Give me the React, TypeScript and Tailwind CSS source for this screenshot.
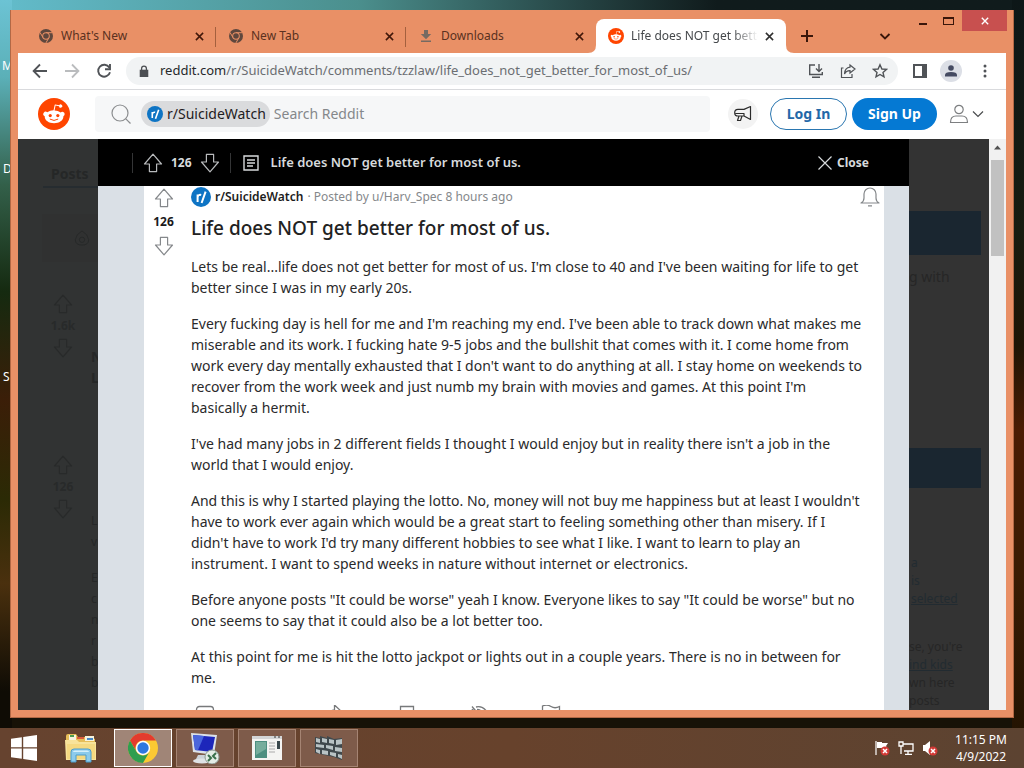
import type { ReactNode } from "react";

const stroke = { fill: "none", stroke: "currentColor" } as const;

function Snoo({ className }: { className: string }) {
  return (
    <svg viewBox="0 0 20 20" className={className} aria-hidden="true">
      <circle cx="10" cy="10" r="10" fill="#ff4500" />
      <path
        fill="#fff"
        d="M16.67 10a1.46 1.46 0 0 0-2.47-1 7.12 7.12 0 0 0-3.85-1.23l.65-3.08 2.14.45a1 1 0 1 0 .13-.61L10.82 4a.31.31 0 0 0-.37.24l-.74 3.47a7.14 7.14 0 0 0-3.9 1.23 1.46 1.46 0 1 0-1.61 2.39 2.87 2.87 0 0 0 0 .44c0 2.24 2.61 4.06 5.83 4.06s5.83-1.82 5.83-4.06a2.87 2.87 0 0 0 0-.44 1.46 1.46 0 0 0 .81-1.33Z"
      />
      <circle cx="7.65" cy="11" r="1" fill="#ff4500" />
      <circle cx="12.4" cy="11" r="1" fill="#ff4500" />
      <path d="M7.6 13.3q2.4 1.6 4.8 0" stroke="#ff4500" strokeWidth=".6" fill="none" strokeLinecap="round" />
    </svg>
  );
}

function ChromeMono() {
  return (
    <svg viewBox="0 0 16 16" className="size-4 shrink-0" aria-hidden="true">
      <circle cx="8" cy="8" r="7" fill="#5f473d" />
      <circle cx="8" cy="8" r="3.8" fill="#e99066" />
      <path d="M8 4.700h6.400M5.100 9.700 1.900 4.300M10.900 9.700l-3.100 5.400" stroke="#e99066" strokeWidth="1" />
      <circle cx="8" cy="8" r="2.800" fill="#5f473d" />
    </svg>
  );
}

function DownloadMono() {
  return (
    <svg viewBox="0 0 16 16" className="size-4 shrink-0" fill="#766a62" aria-hidden="true">
      <path d="M6 2h4v4h3.2L8 11.2 2.8 6H6zM3 12.4h10V14H3z" />
    </svg>
  );
}

function Cross({ className }: { className: string }) {
  return (
    <svg viewBox="0 0 10 10" className={className} {...stroke} strokeWidth="1.7" aria-hidden="true">
      <path d="m1 1 8 8M9 1 1 9" />
    </svg>
  );
}

function VoteArrow({ down = false }: { down?: boolean }) {
  return (
    <svg viewBox="0 0 20 20" className={down ? "size-5 rotate-180" : "size-5"} {...stroke} strokeWidth="1.2" aria-hidden="true">
      <path d="M10 1.2 18.5 11H13.6v7.6H6.4V11H1.5z" strokeLinejoin="round" />
    </svg>
  );
}

function SubIcon({ className }: { className: string }) {
  return (
    <svg viewBox="0 0 20 20" className={className} aria-hidden="true">
      <circle cx="10" cy="10" r="10" fill="#0e74c4" />
      <path d="M6.6 15V7.6M6.6 10.4c.2-2 1.6-2.9 3.6-2.5M10.6 16 14.6 4.6" stroke="#fff" strokeWidth="2" fill="none" />
    </svg>
  );
}

function Tab({ icon, title, active = false, divider = false }: { icon: ReactNode; title: string; active?: boolean; divider?: boolean }) {
  return (
    <div
      className={
        active
          ? "relative flex h-[34px] w-[190px] items-center gap-[7px] rounded-t-lg bg-white pr-3 pl-3 text-[#45484b]"
          : "relative flex h-[34px] w-[190px] items-center gap-[7px] pr-3 pl-3 text-[#5a3120]"
      }
    >
      {icon}
      <span
        className={
          active
            ? "flex-1 overflow-hidden whitespace-nowrap [mask-image:linear-gradient(to_right,black_80%,transparent)]"
            : "flex-1 overflow-hidden whitespace-nowrap"
        }
      >
        {title}
      </span>
      <button aria-label={"Close " + title} className={active ? "text-[#2f2f2f]" : "text-[#42180a]"}>
        <Cross className="size-[9px]" />
      </button>
      {divider && <span className="absolute top-2 right-0 h-5 w-px bg-[#a4603e]" />}
      {active && (
        <>
          <svg viewBox="0 0 8 8" className="absolute bottom-0 -left-2 size-2" aria-hidden="true">
            <path d="M8 0v8H0q8 0 8-8" fill="#fff" />
          </svg>
          <svg viewBox="0 0 8 8" className="absolute -right-2 bottom-0 size-2" aria-hidden="true">
            <path d="M0 0v8h8q-8 0-8-8" fill="#fff" />
          </svg>
        </>
      )}
    </div>
  );
}

function TitleBar() {
  return (
    <header className="flex h-[43px] shrink-0 pl-[15px] text-xs">
      <div className="flex items-end">
        <Tab icon={<ChromeMono />} title="What's New" divider />
        <Tab icon={<ChromeMono />} title="New Tab" divider />
        <Tab icon={<DownloadMono />} title="Downloads" />
        <Tab icon={<Snoo className="size-4 shrink-0" />} title="Life does NOT get better for most of us." active />
      </div>
      <div className="flex flex-1 items-end justify-between pb-[11px] pl-[15px] text-[#3a160a]">
        <button aria-label="New tab" className="flex">
          <svg viewBox="0 0 12 12" className="size-3" {...stroke} strokeWidth="2" aria-hidden="true">
            <path d="M6 0v12M0 6h12" />
          </svg>
        </button>
        <button aria-label="Search tabs" className="flex">
          <svg viewBox="0 0 12 12" className="size-3" {...stroke} strokeWidth="1.8" aria-hidden="true">
            <path d="m1.5 4 4.5 4.5L10.500 4" />
          </svg>
        </button>
      </div>
      <div className="mr-1.5 ml-5 flex h-[21px] text-[#3a160a]">
        <button aria-label="Minimize" className="flex w-6 items-end justify-center pb-1.5">
          <span className="h-0.5 w-2 bg-current" />
        </button>
        <button aria-label="Maximize" className="flex w-[27px] items-center justify-center">
          <span className="h-2 w-[11px] border border-t-2 border-current" />
        </button>
        <button aria-label="Close window" className="flex w-[45px] items-center justify-center bg-[#c8504f] text-white">
          <Cross className="size-2" />
        </button>
      </div>
    </header>
  );
}

function Toolbar() {
  return (
    <nav className="flex h-[37px] shrink-0 items-center border-b border-[#d9dadd] bg-white pr-3.5 pl-3.5 text-[#505357]">
      <div className="flex gap-4">
        <button aria-label="Back">
          <svg viewBox="0 0 16 16" className="size-4" {...stroke} strokeWidth="1.8" aria-hidden="true">
            <path d="M15 8H2M8 1.500 1.600 8 8 14.500" />
          </svg>
        </button>
        <button aria-label="Forward" className="text-[#babcbe]">
          <svg viewBox="0 0 16 16" className="size-4" {...stroke} strokeWidth="1.8" aria-hidden="true">
            <path d="M1 8h13M8 1.500 14.400 8 8 14.500" />
          </svg>
        </button>
        <button aria-label="Reload">
          <svg viewBox="0 0 16 16" className="size-4" {...stroke} strokeWidth="1.9" aria-hidden="true">
            <path d="M13.300 4.500A6 6 0 1 0 14 9.300M14 1v5.200H9" />
          </svg>
        </button>
      </div>
      <div className="ml-3.5 flex h-7 flex-1 items-center rounded-full bg-[#f1f3f4] pr-2.5 pl-3">
        <svg viewBox="0 0 12 14" className="h-3 w-3 shrink-0" fill="#4b4e52" aria-hidden="true">
          <path d="M1 5.500h10V14H1z" />
          <path d="M3.200 6V4a2.800 2.800 0 0 1 5.600 0v2" fill="none" stroke="#4b4e52" strokeWidth="1.500" />
        </svg>
        <a href="#post" className="ml-2.5 flex-1 text-[13px] whitespace-nowrap text-[#6b6e72]">
          <span className="text-[#26282b]">reddit.com</span>/r/SuicideWatch/comments/tzzlaw/life_does_not_get_better_for_most_of_us/
        </a>
        <div className="flex gap-4">
          <button aria-label="Install">
            <svg viewBox="0 0 16 16" className="size-4" {...stroke} strokeWidth="1.4" aria-hidden="true">
              <path d="M7 2H1.700v9.500h12.600V9M4 14.300h8M11 1v7M8 5.500l3 3 3-3" />
            </svg>
          </button>
          <button aria-label="Share">
            <svg viewBox="0 0 16 16" className="size-4" {...stroke} strokeWidth="1.2" aria-hidden="true">
              <path d="M3.500 5H1.500v9.500H12V11M10 2l5 4-5 4V7.700C7.500 7.600 5.800 8.500 4.500 11 4.700 7 6.500 4.600 10 4.200z" />
            </svg>
          </button>
          <button aria-label="Bookmark">
            <svg viewBox="0 0 16 16" className="size-4" {...stroke} strokeWidth="1.4" aria-hidden="true">
              <path d="m8 1.800 1.900 4.200 4.500.4-3.400 3 1 4.500L8 11.500l-4 2.400 1-4.500-3.400-3 4.500-.4z" />
            </svg>
          </button>
        </div>
      </div>
      <div className="ml-3.5 flex items-center gap-3">
        <button aria-label="Side panel" className="flex h-3.5 w-4 items-center justify-center">
          <span className="h-3.5 w-3.5 border-2 border-r-[5px] border-[#505357]" />
        </button>
        <button aria-label="Profile" className="flex size-[22px] items-center justify-center rounded-full bg-[#dcdfe6]">
          <svg viewBox="0 0 12 12" className="size-3" fill="#454b62" aria-hidden="true">
            <circle cx="6" cy="3" r="2.800" />
            <path d="M0 11.500V10q0-3 6-3t6 3v1.500z" />
          </svg>
        </button>
        <button aria-label="Menu" className="ml-1">
          <svg viewBox="0 0 14 14" className="size-3.5" fill="#505357" aria-hidden="true">
            <circle cx="7" cy="2" r="1.500" />
            <circle cx="7" cy="7" r="1.500" />
            <circle cx="7" cy="12" r="1.500" />
          </svg>
        </button>
      </div>
    </nav>
  );
}

function RedditHeader() {
  return (
    <div className="flex h-[49px] shrink-0 items-center bg-white pr-[29px] pb-px pl-5">
      <a href="#home" aria-label="Reddit home">
        <Snoo className="size-8" />
      </a>
      <div className="ml-[25px] flex h-9 flex-1 items-center rounded bg-[#f6f7f8] pl-4">
        <svg viewBox="0 0 20 20" className="size-5 shrink-0 text-[#8b8d8f]" {...stroke} strokeWidth="1.200" aria-hidden="true">
          <circle cx="9" cy="9" r="8" />
          <path d="m14.800 14.800 4.700 4.700" />
        </svg>
        <span className="ml-2.5 flex h-[26px] items-center gap-1 rounded-full bg-[#dadbdd] pr-1 pl-1.5 text-sm text-[#1f2022]">
          <SubIcon className="size-4" />
          r/SuicideWatch
        </span>
        <input
          aria-label="Search Reddit"
          placeholder="Search Reddit"
          className="ml-1 min-w-0 flex-1 bg-transparent text-sm outline-none placeholder:text-[#85888b]"
        />
      </div>
      <button aria-label="Advertise" className="ml-[18px] flex size-[30px] items-center justify-center rounded-full bg-[#f3f3f3] text-[#2b2b2b]">
        <svg viewBox="0 0 20 20" className="size-5" {...stroke} strokeWidth="1.200" strokeLinejoin="round" aria-hidden="true">
          <path d="M17.500 2.500v13L11 12H5a3.300 3.300 0 0 1 0-6.600h6zM2.500 9.500H11v2.500M6 12l-1.500 4.500h3L9 12" />
        </svg>
      </button>
      <button className="ml-3 h-8 w-[77px] rounded-full border border-[#2a76b0] text-sm font-bold text-[#2368a8]">Log In</button>
      <button className="ml-[5px] h-8 w-[85px] rounded-full bg-[#0579d3] text-sm font-bold text-white">Sign Up</button>
      <button aria-label="User menu" className="ml-3 flex items-center gap-0.5 text-[#7d7f81]">
        <svg viewBox="0 0 20 20" className="size-5" {...stroke} strokeWidth="1.200" aria-hidden="true">
          <circle cx="10" cy="5.500" r="4.200" />
          <path d="M1.500 18.500q0-6.500 5.500-6.500h6q5.500 0 5.500 6.500z" strokeLinejoin="round" />
        </svg>
        <svg viewBox="0 0 14 14" className="-mr-2 size-3.5 text-[#4a4c4e]" {...stroke} strokeWidth="1.200" aria-hidden="true">
          <path d="m2 4.500 5 5 5-5" />
        </svg>
      </button>
    </div>
  );
}

function GhostVotes({ count }: { count: string }) {
  return (
    <div className="flex w-14 flex-col items-center gap-1 text-xs font-bold text-[#282a2a]">
      <VoteArrow />
      {count}
      <VoteArrow down />
    </div>
  );
}

function LeftBackdrop() {
  return (
    <div className="w-20 shrink-0 overflow-hidden bg-[#313333] text-[#252727]">
      <div className="flex h-[49px] items-end justify-end">
        <span className="w-[55px] border-b-2 border-[#262c30] pb-0.5 pl-2 text-sm font-bold">Posts</span>
      </div>
      <div className="mt-[26px] ml-6 flex h-12 items-center justify-end bg-[#303131] pr-2">
        <svg viewBox="0 0 18 18" className="size-4" {...stroke} aria-hidden="true">
          <path d="M9 1Q2 5 1.500 11q0 6 7.500 6t7.500-6Q16 5 9 1z" />
          <circle cx="9" cy="11" r="3" />
        </svg>
      </div>
      <div className="mt-8 flex justify-end">
        <GhostVotes count="1.6k" />
        <div className="w-[7px] pt-[52px] text-sm leading-[21px] font-bold">
          <p>N</p>
          <p>L</p>
        </div>
      </div>
      <div className="mt-[67px] flex justify-end">
        <GhostVotes count="126" />
        <div className="w-[7px] pt-[55px] text-xs leading-[21px]">
          <p>L</p>
          <p>v</p>
          <p className="mt-[15px]">E</p>
          <p>c</p>
          <p>n</p>
          <p>r</p>
          <p>b</p>
          <p>b</p>
        </div>
      </div>
    </div>
  );
}

function RightBackdrop() {
  return (
    <div className="w-20 shrink-0 overflow-hidden bg-[#333] pt-[72px] pr-2 text-sm text-[#262626]">
      <div className="h-11 bg-[#1a2630]" />
      <p className="mt-3 whitespace-nowrap">g with</p>
      <div className="mt-[161px] h-10 bg-[#1a2630]" />
      <div className="mt-[66px] pl-0.5 text-xs leading-[18px] whitespace-nowrap text-[#222b31]">
        <p>a</p>
        <p>is</p>
        <p className="underline">selected</p>
      </div>
      <div className="mt-[30px] text-xs leading-[18px] whitespace-nowrap">
        <p>se, you're</p>
        <p className="text-[#222b31] underline">ind kids</p>
        <p>wn here</p>
        <p>posts</p>
      </div>
    </div>
  );
}

const paragraphs = [
  "Lets be real...life does not get better for most of us. I'm close to 40 and I've been waiting for life to get better since I was in my early 20s.",
  "Every fucking day is hell for me and I'm reaching my end. I've been able to track down what makes me miserable and its work. I fucking hate 9-5 jobs and the bullshit that comes with it. I come home from work every day mentally exhausted that I don't want to do anything at all. I stay home on weekends to recover from the work week and just numb my brain with movies and games. At this point I'm basically a hermit.",
  "I've had many jobs in 2 different fields I thought I would enjoy but in reality there isn't a job in the world that I would enjoy.",
  "And this is why I started playing the lotto. No, money will not buy me happiness but at least I wouldn't have to work ever again which would be a great start to feeling something other than misery. If I didn't have to work I'd try many different hobbies to see what I like. I want to learn to play an instrument. I want to spend weeks in nature without internet or electronics.",
  "Before anyone posts \"It could be worse\" yeah I know. Everyone likes to say \"It could be worse\" but no one seems to say that it could also be a lot better too.",
  "At this point for me is hit the lotto jackpot or lights out in a couple years. There is no in between for me.",
];

function PostActions() {
  return (
    <div className="mt-[17px] flex items-start text-[#77797b]">
      <button aria-label="Comments" className="w-[130px] pl-1">
        <svg viewBox="0 0 20 20" className="size-5" {...stroke} strokeWidth="1.300" aria-hidden="true">
          <path d="M1.500 5q0-3.500 3-3.500h11q3 0 3 3.500v7q0 3-3 3h-5L6 19v-4q-4.500 0-4.500-3z" />
        </svg>
      </button>
      <button aria-label="Share post" className="w-[76px] pl-1">
        <svg viewBox="0 0 20 20" className="size-5" {...stroke} strokeWidth="1.300" aria-hidden="true">
          <path d="m9.500 0 8.500 8-8.500 8v-4.500Q4 11 1.500 17 1 6 9.500 5z" />
        </svg>
      </button>
      <button aria-label="Save" className="w-[72px]">
        <svg viewBox="0 0 20 20" className="size-5" {...stroke} strokeWidth="1.300" aria-hidden="true">
          <path d="M3.500 1.500h13v17L10 14l-6.500 4.500z" />
        </svg>
      </button>
      <button aria-label="Hide" className="w-[72px]">
        <svg viewBox="0 0 20 20" className="size-5" {...stroke} strokeWidth="1.300" aria-hidden="true">
          <path d="M1 9Q2 5 5 3.500M3 1.500l14 16M7 2q7-1.500 11 5M8 4.500q4 0 6 4" />
        </svg>
      </button>
      <button aria-label="Report">
        <svg viewBox="0 0 20 20" className="size-5" {...stroke} strokeWidth="1.300" aria-hidden="true">
          <path d="M1.500 20V1Q6-1 10 1.500t8.500 0V12Q14 14 10 12t-8.500 0" />
        </svg>
      </button>
    </div>
  );
}

function PostView() {
  return (
    <main id="post" className="flex min-w-0 flex-1 flex-col bg-[#dae0e6]">
      <div className="flex h-[47px] shrink-0 items-center bg-black pr-10 pl-[34px] text-[#d7dadc]">
        <div className="flex items-center gap-2 border-x border-[#343536] px-2.5 text-xs font-bold">
          <button aria-label="Upvote" className="text-[#b8babc]">
            <VoteArrow />
          </button>
          <span>126</span>
          <button aria-label="Downvote" className="text-[#b8babc]">
            <VoteArrow down />
          </button>
        </div>
        <svg viewBox="0 0 16 16" className="ml-3 size-4 shrink-0" {...stroke} strokeWidth="1.400" aria-hidden="true">
          <path d="M1 1h14v14H1zM4 5h8M4 8h8M4 11h6" />
        </svg>
        <h2 className="ml-3 flex-1 text-[13px] font-semibold">Life does NOT get better for most of us.</h2>
        <button className="flex items-center gap-1 text-xs font-bold">
          <svg viewBox="0 0 16 16" className="size-4" {...stroke} strokeWidth="1.200" aria-hidden="true">
            <path d="m1.500 1.500 13 13M14.500 1.500l-13 13" />
          </svg>
          Close
        </button>
      </div>
      <article className="mr-[25px] ml-[46px] flex min-h-0 flex-1 overflow-hidden bg-white">
        <div className="flex w-[39px] shrink-0 flex-col items-center gap-1.5 pt-0.5 text-xs font-bold text-[#1a1a1b]">
          <button aria-label="Upvote post" className="text-[#85888b]">
            <VoteArrow />
          </button>
          <span>126</span>
          <button aria-label="Downvote post" className="text-[#85888b]">
            <VoteArrow down />
          </button>
        </div>
        <div className="min-w-0 flex-1 pr-1 pl-2">
          <div className="flex h-[22px] items-center text-xs text-[#85888b]">
            <SubIcon className="size-5" />
            <a href="#subreddit" className="ml-1 font-semibold text-[#1c1c1c]">
              r/SuicideWatch
            </a>
            <span className="ml-1 flex-1">· Posted by u/Harv_Spec 8 hours ago</span>
            <button aria-label="Follow post">
              <svg viewBox="0 0 20 20" className="size-5" {...stroke} strokeWidth="1.200" aria-hidden="true">
                <path d="M1 16q3-1.500 3-5V7a6 6 0 0 1 12 0v4q0 3.500 3 5zM8 18.800h4" strokeLinejoin="round" />
              </svg>
            </button>
          </div>
          <h1 className="mt-1.5 text-[19px] leading-7 font-medium text-[#222]">Life does NOT get better for most of us.</h1>
          <div className="mt-3.5 flex flex-col gap-[15px] pr-[15px] text-sm leading-[21px] text-[#2a2a2b]">
            {paragraphs.map((text) => (
              <p key={text}>{text}</p>
            ))}
          </div>
          <PostActions />
        </div>
      </article>
    </main>
  );
}

function Scrollbar() {
  return (
    <div className="flex w-[17px] shrink-0 flex-col items-center bg-[#f1f1f1]">
      <svg viewBox="0 0 17 21" className="h-[21px] w-[17px] shrink-0" aria-hidden="true">
        <path d="M5 10.500 8.500 6.500l3.500 4z" fill="#505050" />
      </svg>
      <div className="h-24 w-[13px] bg-[#c1c1c1]" />
    </div>
  );
}

function Taskbar() {
  const item = "flex h-[38px] w-[58px] items-center justify-center border";
  return (
    <footer className="relative flex h-10 shrink-0 items-center bg-linear-to-r from-[#66432f] via-[#67422c] to-[#5c4331] pl-[11px] text-white">
      <button aria-label="Start">
        <svg viewBox="0 0 26 26" className="size-[26px]" fill="#fff" aria-hidden="true">
          <path d="M0 3.800 10.800 2.200v10.100H0zM12.200 2 26 0v12.300H12.200zM0 13.600h10.800v10.200L0 22.200zM12.200 13.600H26V26l-13.800-2z" />
        </svg>
      </button>
      <button aria-label="File Explorer" className="ml-7 w-8">
        <svg viewBox="0 0 32 30" className="h-[30px] w-8" aria-hidden="true">
          <path d="M1 3q0-2 2-2h8l2 3h13l4 2v21H1z" fill="#e6bd58" />
          <path d="M4 2h7v5H4zM20 3h9v5h-9z" fill="#f7f3de" />
          <path d="M5 2h4v2H5z" fill="#4c9c51" />
          <path d="M12 4h7v2h-7z" fill="#db5a3c" />
          <path d="M22 5h6v2h-6z" fill="#4a8ac6" />
          <path d="M0 7h12l2 2h17v18H1z" fill="#f8e39a" />
          <path d="M2 11h28v15H2z" fill="#f5d981" />
          <path d="M6 29V19q0-3 3-3h14q3 0 3 3v10h-5v-7H11v7z" fill="#8ccbec" stroke="#4c9dcc" />
          <path d="M8 19q0-1.500 2-1.500h12q2 0 2 1.500z" fill="#d5f0fb" />
        </svg>
      </button>
      <div className="ml-[17px] flex gap-1">
        <button aria-label="Google Chrome" className={item + " border-white bg-[#a08577]"}>
          <svg viewBox="0 0 30 30" className="size-[30px]" aria-hidden="true">
            <circle cx="15" cy="15" r="15" fill="#fbc933" />
            <path d="M8.500 18.800 2 7.500A15 15 0 0 1 28 7.500H15a7.500 7.500 0 0 0-6.500 11.300z" fill="#e33b2e" />
            <path d="M2 7.500A15 15 0 0 0 15 30l6.500-11.200a7.500 7.500 0 0 1-13 0z" fill="#2f9e4f" />
            <circle cx="15" cy="15" r="7.200" fill="#fff" />
            <circle cx="15" cy="15" r="5.700" fill="#2f78e0" />
          </svg>
        </button>
        <button aria-label="Remote Desktop" className={item + " border-[#a58473] bg-[#7e5b4a]"}>
          <svg viewBox="0 0 32 32" className="size-8" aria-hidden="true">
            <path d="M9 23h11l2 6H6z" fill="#ccd2d8" />
            <ellipse cx="13" cy="29" rx="9" ry="2.500" fill="#dfe3e6" />
            <path d="m2 1 26 2-3 20L4 20z" fill="#dbe1e8" />
            <path d="m4 3 22 2-3 15L6 18z" fill="#1d26ba" />
            <path d="m4 3 11 1-6 14.300L6 18z" fill="#4a66dc" />
            <circle cx="23" cy="25" r="7" fill="#e4ece6" stroke="#8f9b94" />
            <path d="m19 23 3 3-3 3M27 21l-3 3 3 3" fill="none" stroke="#39704b" strokeWidth="2" />
          </svg>
        </button>
        <button aria-label="Server Manager" className={item + " border-[#a58473] bg-[#7e5b4a]"}>
          <svg viewBox="0 0 30 26" className="h-[26px] w-[30px]" aria-hidden="true">
            <path d="M0 1h30v24H0z" fill="#f4f4f2" />
            <path d="M0 1h30v3H0z" fill="#d2d5d6" />
            <path d="M3 6h12v17H3z" fill="#4d8f80" />
            <path d="M4 7h10v7L4 20z" fill="#76ad9c" />
            <path d="M17 8h6M17 11h6M17 14h6M17 17h6" stroke="#aaa" />
            <path d="M25 6h3v8h-3z" fill="#39484c" />
            <path d="M22 2h2M26 2h2" stroke="#333" />
          </svg>
        </button>
        <button aria-label="Firewall" className={item + " border-[#a58473] bg-[#7e5b4a]"}>
          <svg viewBox="0 0 30 28" className="h-7 w-[30px]" aria-hidden="true">
            <path d="m1 3 5 1V2l7 2V2l7 3 8-1v22l-8-3-19-4z" fill="#3f484c" />
            <path
              d="m2 4 4 1v4L2 8zM8 4l5 1v4L8 8zM15 5l5 1v4l-5-1zM22 6l6-1v5l-6 1zM2 10l8 1v3l-8-1zM12 11l7 1v4l-7-2zM21 13l7 1v4l-7-1zM2 15l4 1v4l-4-2zM8 16l6 1v4l-6-1zM16 18l6 1v4l-6-2zM24 20l4 1v4l-4-2z"
              fill="#b9c3c5"
            />
          </svg>
        </button>
      </div>
      <div className="ml-auto flex items-center gap-2">
        <svg viewBox="0 0 16 16" className="size-4" aria-label="Action Center" role="img">
          <path d="M2 1v14" stroke="#fff" strokeWidth="1.200" />
          <path d="M3 2h5v1h6l-2 3 1 2H3z" fill="#fff" />
          <circle cx="11" cy="11" r="4.500" fill="#d33a36" />
          <path d="m9 9 4 4M13 9l-4 4" stroke="#fff" strokeWidth="1.500" />
        </svg>
        <svg viewBox="0 0 16 16" className="size-4" {...stroke} strokeWidth="1.300" aria-label="Network" role="img">
          <path d="M5 4h10v7H6M10 11v3M7 14.300h7M1 2h4v4H1zM3 6v8" />
        </svg>
        <svg viewBox="0 0 16 16" className="size-4" aria-label="Volume muted" role="img">
          <path d="M1 5h2l5-4v14l-5-4H1z" fill="#fff" />
          <circle cx="11" cy="11" r="4.500" fill="#d33a36" />
          <path d="m9 9 4 4M13 9l-4 4" stroke="#fff" strokeWidth="1.500" />
        </svg>
      </div>
      <time className="mr-[17px] ml-[17px] text-center text-xs leading-[17px]">
        11:15 PM
        <br />
        4/9/2022
      </time>
    </footer>
  );
}

export default function App() {
  return (
    <div className="relative flex h-screen flex-col overflow-hidden bg-[#171207] font-['Noto_Sans',sans-serif]">
      <div className="absolute inset-x-0 top-0 h-3 bg-linear-to-r from-[#63bccb] via-[#4b8f8d] via-35% to-[#101b1c] to-70%" />
      <div className="absolute inset-y-0 left-0 w-3 bg-[linear-gradient(to_bottom,#6cc3d4_0%,#5bb0b8_10%,#33604a_24%,#152a10_38%,#3b1e08_52%,#2b2a05_65%,#4a300e_76%,#0f0c05_90%)]" />
      <div className="absolute inset-y-0 right-0 w-3 bg-[linear-gradient(to_bottom,#0d1718_0%,#181c10_30%,#1f1505_45%,#4b1c03_56%,#3a1c03_75%,#241402_95%)]" />
      <span className="absolute top-[58px] left-0.5 text-xs text-white">M</span>
      <span className="absolute top-[161px] left-[3px] text-xs text-white">D</span>
      <span className="absolute top-[369px] left-[3px] text-xs text-white">S</span>
      <div className="relative m-2.5 flex min-h-0 flex-1 flex-col border border-t-0 border-[#b26845] bg-[#e99066]">
        <TitleBar />
        <div className="mx-[7px] mb-[7px] flex min-h-0 flex-1 flex-col">
          <Toolbar />
          <RedditHeader />
          <div className="flex min-h-0 flex-1 overflow-hidden">
            <LeftBackdrop />
            <PostView />
            <RightBackdrop />
            <Scrollbar />
          </div>
        </div>
      </div>
      <Taskbar />
    </div>
  );
}
